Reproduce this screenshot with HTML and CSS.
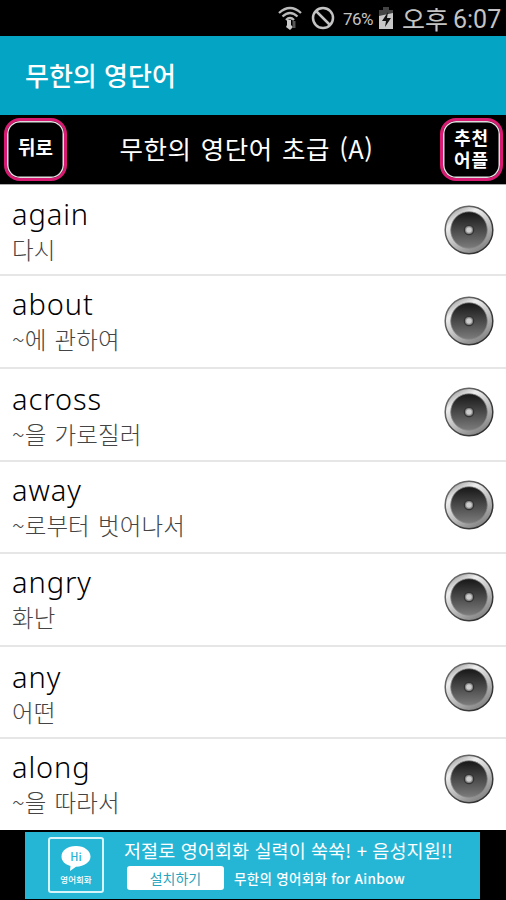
FILE: index.html
```html
<!DOCTYPE html>
<html lang="ko">
<head>
  <meta charset="UTF-8" />
  <title>무한의 영단어</title>
  <link rel="stylesheet" href="styles.css">
</head>
<body>
  <svg class="defs" width="0" height="0">
    <defs>
      <linearGradient id="rim" x1="0.2" y1="0" x2="0.8" y2="1">
        <stop offset="0" stop-color="#999" />
        <stop offset="0.25" stop-color="#eee" />
        <stop offset="0.6" stop-color="#bbb" />
        <stop offset="1" stop-color="#777" />
      </linearGradient>
      <linearGradient id="edge" x1="0" y1="0" x2="1" y2="1">
        <stop offset="0" stop-color="#777" />
        <stop offset="1" stop-color="#222" />
      </linearGradient>
      <linearGradient id="cone" x1="0" y1="0" x2="0" y2="1">
        <stop offset="0" stop-color="#161616" />
        <stop offset="0.5" stop-color="#494949" />
        <stop offset="1" stop-color="#7c7c7c" />
      </linearGradient>
      <symbol id="speaker" viewBox="0 0 50 50">
        <circle cx="25" cy="25" r="23.8" fill="url(#rim)" stroke="url(#edge)" stroke-width="1.5" />
        <circle cx="25" cy="25" r="18.3" fill="url(#cone)" stroke="#888" stroke-width="0.8" />
        <circle cx="25" cy="25" r="5.3" fill="#333" />
        <circle cx="25" cy="25" r="4" fill="#888" />
        <circle cx="25" cy="25" r="2.8" fill="#ccc" />
      </symbol>
    </defs>
  </svg>

  <div class="status">
    <svg class="wifi" width="24" height="26" viewBox="0 0 24 26">
      <g fill="none" stroke="#bbb" stroke-width="2.3">
        <path d="M1 8 Q12 -2 23 8" />
        <path d="M4.500 11.500 Q12 4.500 19.500 11.500" />
        <path d="M8 15 Q12 11 16 15" />
      </g>
      <path d="M9 15h4v5l2 2-3 3-4-3 1-2z" fill="#ccc" />
      <path d="M16 16v7" stroke="#555" stroke-width="3" />
    </svg>
    <svg class="block" width="24" height="24" viewBox="0 0 24 24">
      <circle cx="12" cy="12" r="10" fill="none" stroke="#c4c4c4" stroke-width="2.500" />
      <path d="M5 5l14 14" stroke="#c4c4c4" stroke-width="2.500" />
    </svg>
    <span class="percent">76%</span>
    <svg class="battery" width="16" height="23" viewBox="0 0 16 23">
      <path d="M5 0h6v3h4v9H1V3h4z" fill="#444" />
      <path d="M1 9l14-3v16H1z" fill="#c8c8c8" />
      <path d="M10 5L4 14h4l-1 6 6-9H9z" fill="#111" />
    </svg>
    <span class="ampm">오후</span>
    <span class="clock">6:07</span>
  </div>

  <header class="appbar">무한의 영단어</header>

  <nav class="toolbar">
    <button class="btn">뒤로</button>
    <h1>무한의 영단어 초급 (A)</h1>
    <button class="btn two"><span>추천</span><span>어플</span></button>
  </nav>

  <main>
    <div class="row first">
      <div class="text"><div class="word">again</div><div class="mean">다시</div></div>
      <svg class="speaker"><use href="#speaker" /></svg>
    </div>
    <div class="row second">
      <div class="text"><div class="word">about</div><div class="mean">~에 관하여</div></div>
      <svg class="speaker"><use href="#speaker" /></svg>
    </div>
    <div class="row low">
      <div class="text"><div class="word">across</div><div class="mean">~을 가로질러</div></div>
      <svg class="speaker"><use href="#speaker" /></svg>
    </div>
    <div class="row">
      <div class="text"><div class="word">away</div><div class="mean">~로부터 벗어나서</div></div>
      <svg class="speaker"><use href="#speaker" /></svg>
    </div>
    <div class="row">
      <div class="text"><div class="word">angry</div><div class="mean">화난</div></div>
      <svg class="speaker"><use href="#speaker" /></svg>
    </div>
    <div class="row low high-icon">
      <div class="text"><div class="word">any</div><div class="mean">어떤</div></div>
      <svg class="speaker"><use href="#speaker" /></svg>
    </div>
    <div class="row last high-icon">
      <div class="text"><div class="word">along</div><div class="mean">~을 따라서</div></div>
      <svg class="speaker"><use href="#speaker" /></svg>
    </div>
  </main>

  <footer>
    <div class="banner">
      <div class="logo">
        <div class="bubble">
          <svg width="30" height="26" viewBox="0 0 30 26">
            <path d="M15 0C6.500 0 .5 4.500 .5 10.500c0 4.500 3.500 8 9 9.500L9 25l6-4.300C23.500 20.500 29.500 16 29.500 10.500S23.500 0 15 0z" fill="#fff" />
          </svg>
          <span>Hi</span>
        </div>
        <div class="name">영어회화</div>
      </div>
      <div class="ad">
        <div class="slogan">저절로 영어회화 실력이 쑥쑥! + 음성지원!!</div>
        <div class="line">
          <span class="install">설치하기</span>
          <span class="product">무한의 영어회화 for Ainbow</span>
        </div>
      </div>
    </div>
  </footer>
</body>
</html>
```
FILE: styles.css
```css
* {
  box-sizing: border-box;
}

body {
  margin: 0;
  width: 506px;
  height: 900px;
  overflow: hidden;
  background: #fff;
  font-family: "Noto Sans CJK KR", sans-serif;
}

.defs {
  display: block;
}

.status {
  height: 36px;
  background: #000;
  color: #c4c4c4;
  display: flex;
  align-items: center;
  justify-content: flex-end;
  padding-right: 6px;
  white-space: nowrap;
}

.wifi {
  margin-right: 9px;
}

.block {
  margin-right: 8px;
}

.percent {
  font-family: Roboto, sans-serif;
  font-size: 17px;
  width: 32px;
  letter-spacing: -0.6px;
  margin-right: 3px;
  padding-top: 2px;
}

.battery {
  margin-right: 8px;
}

.ampm {
  font-size: 25px;
  line-height: 36px;
  width: 44px;
  margin-right: 7px;
}

.clock {
  font-family: Roboto, sans-serif;
  font-size: 25px;
  width: 47px;
  padding-top: 2px;
}

.appbar {
  height: 79px;
  line-height: 77px;
  padding-left: 25px;
  background: #04a5c4;
  color: #fff;
  font-size: 26px;
  font-weight: 500;
}

.toolbar {
  height: 70px;
  background: #000;
  display: flex;
  align-items: center;
  justify-content: space-between;
  padding: 0 3px 0 4px;
  border-bottom: 1px solid #aaa;
}

.toolbar h1 {
  margin: 0;
  padding: 0 14px 3px 0;
  color: #fff;
  font-size: 25.5px;
  font-weight: 400;
  letter-spacing: 0.5px;
  word-spacing: 1.7px;
  line-height: 36px;
}

.btn {
  width: 63px;
  height: 63px;
  padding: 0 0 5px;
  border: 3px solid #d81b72;
  border-radius: 16px;
  box-shadow: inset 0 0 0 1.5px #ddd;
  background: #000;
  color: #fff;
  font-family: inherit;
  font-size: 19px;
  font-weight: 700;
  line-height: 22px;
}

.two {
  display: flex;
  flex-direction: column;
  align-items: center;
  justify-content: center;
  padding: 0 0 3px;
  font-size: 18px;
  letter-spacing: 0.8px;
}

.two span {
  height: 22px;
}

.row {
  height: 92.5px;
  border-bottom: 2px solid #e6e6e6;
  display: flex;
  align-items: flex-start;
  justify-content: space-between;
  padding: 8px 12px 0;
}

.first {
  height: 91px;
  padding-top: 9px;
}

.second {
  height: 93px;
}

.low .text {
  padding-top: 2px;
}

.last {
  height: 91px;
  border-bottom: none;
}

.word {
  color: #000;
  font-family: "Noto Sans", sans-serif;
  font-size: 29px;
  font-weight: 350;
  letter-spacing: 0.9px;
  line-height: 40px;
}

.mean {
  color: #444;
  font-size: 23.5px;
  font-weight: 300;
  letter-spacing: 0.1px;
  word-spacing: 1.5px;
  line-height: 30px;
}

.speaker {
  width: 50px;
  height: 50px;
  margin-top: 10px;
}

.first .speaker {
  margin-top: 11px;
}

.second .speaker {
  margin-top: 12px;
}

.high-icon .speaker {
  margin-top: 7px;
}

footer {
  height: 70px;
  background: #000;
  padding: 2px 26px 1px 25px;
}

.banner {
  height: 67px;
  background: #26b6d5;
  color: #fff;
  display: flex;
  padding: 5px 0 0 23px;
}

.logo {
  width: 56px;
  height: 56px;
  border: 2px solid #d5f5fb;
  border-radius: 3px;
  text-align: center;
}

.bubble {
  position: relative;
  height: 26px;
  margin-top: 7px;
}

.bubble svg {
  display: block;
  margin: 0 auto;
}

.bubble span {
  position: absolute;
  left: 0;
  right: 0;
  top: 3px;
  color: #26b6d5;
  font-size: 11px;
  font-weight: 500;
  line-height: 15px;
}

.name {
  margin-top: 1px;
  font-size: 8.500px;
  font-weight: 500;
  line-height: 12px;
}

.ad {
  margin-left: 20px;
  white-space: nowrap;
}

.slogan {
  font-size: 18.5px;
  letter-spacing: 0.1px;
  line-height: 26px;
}

.line {
  display: flex;
  align-items: center;
  margin: 3px 0 0 3px;
}

.install {
  width: 97px;
  height: 24px;
  border-radius: 3px;
  background: #fff;
  color: #26a4be;
  font-size: 14px;
  line-height: 24px;
  text-align: center;
}

.product {
  margin-left: 10px;
  font-size: 13.5px;
  font-weight: 500;
  letter-spacing: 0.3px;
  line-height: 24px;
}
```
